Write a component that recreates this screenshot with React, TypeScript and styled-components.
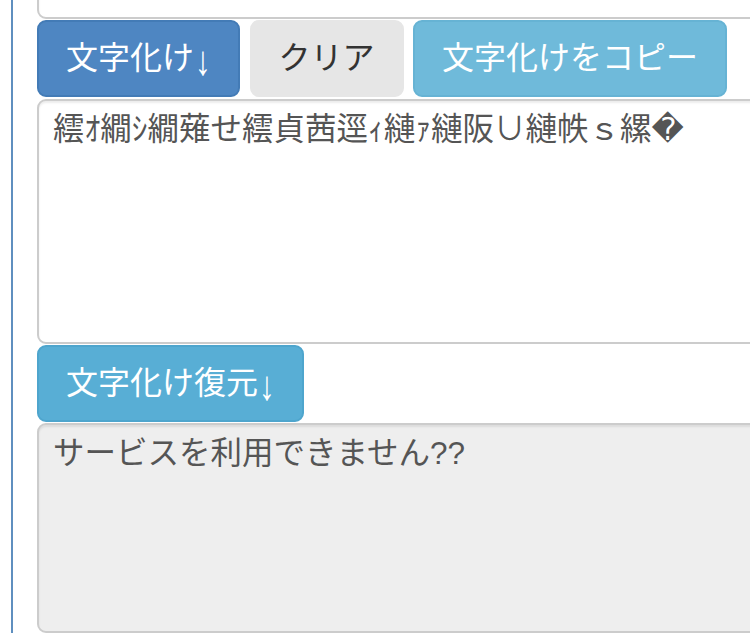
import React from "react";
import styled, { createGlobalStyle } from "styled-components";

const GlobalStyle = createGlobalStyle`
  html, body {
    margin: 0;
    padding: 0;
    background: #ffffff;
    overflow: hidden;
  }
`;

const FONT = `"Liberation Sans", "Noto Sans CJK JP", "DejaVu Sans", sans-serif`;

const Page = styled.div`
  padding-left: 11px;
  margin-top: -201px;
`;

const Panel = styled.div`
  display: flex;
  flex-direction: column;
  border-left: 2px solid #5f8fbf;
  padding-left: 24px;
  width: 820px;
`;

const Field = styled.textarea<{ $h: number; $readonly?: boolean }>`
  display: block;
  box-sizing: border-box;
  width: 100%;
  height: ${(p) => p.$h}px;
  margin: 0;
  padding: 6px 14px;
  border: 2px solid #cccccc;
  border-radius: 9px;
  background: ${(p) => (p.$readonly ? "#eeeeee" : "#ffffff")};
  box-shadow: inset 0 2px 2px rgba(0, 0, 0, 0.075);
  color: #555555;
  font-family: ${FONT};
  font-size: 31.5px;
  line-height: 1.42857;
  resize: none;
  outline: none;
  overflow: hidden;
`;

const ButtonRow = styled.div<{ $mt: number; $mb: number }>`
  display: flex;
  gap: 9.5px;
  margin: ${(p) => p.$mt}px 0 ${(p) => p.$mb}px;
`;

const variants = {
  primary: { bg: "#4e86c2", border: "#437bb6", color: "#ffffff" },
  plain: { bg: "#e6e6e6", border: "#e6e6e6", color: "#333333" },
  info: { bg: "#6fbada", border: "#66b3d4", color: "#ffffff" },
  infoDark: { bg: "#58aed5", border: "#4ea5cd", color: "#ffffff" },
};

type Variant = keyof typeof variants;

const Button = styled.button<{ $v: Variant }>`
  box-sizing: border-box;
  height: 77px;
  padding: 0 27px;
  border: 2px solid ${(p) => variants[p.$v].border};
  border-radius: 9px;
  background: ${(p) => variants[p.$v].bg};
  color: ${(p) => variants[p.$v].color};
  font-family: ${FONT};
  font-size: 32px;
  line-height: 1.42857;
  white-space: nowrap;
  cursor: pointer;
`;

const Arrow = styled.span`
  display: inline-block;
  margin-left: 1px;
  transform: scaleY(1.3);
  transform-origin: 50% 30%;
`;

const garbled = "繧ｵ繝ｼ繝薙せ繧貞茜逕ｨ縺ｧ縺阪∪縺帙ｓ縲�";

export default function App() {
  return (
    <>
      <GlobalStyle />
      <Page>
        <Panel>
          <Field $h={220} defaultValue="" />
          <ButtonRow $mt={1} $mb={2}>
            <Button $v="primary">
              文字化け<Arrow>↓</Arrow>
            </Button>
            <Button $v="plain">クリア</Button>
            <Button $v="info">文字化けをコピー</Button>
          </ButtonRow>
          <Field $h={245} defaultValue={garbled} />
          <ButtonRow $mt={1} $mb={1}>
            <Button $v="infoDark">
              文字化け復元<Arrow>↓</Arrow>
            </Button>
          </ButtonRow>
          <Field $h={210} $readonly readOnly defaultValue="サービスを利用できません??" />
        </Panel>
      </Page>
    </>
  );
}
